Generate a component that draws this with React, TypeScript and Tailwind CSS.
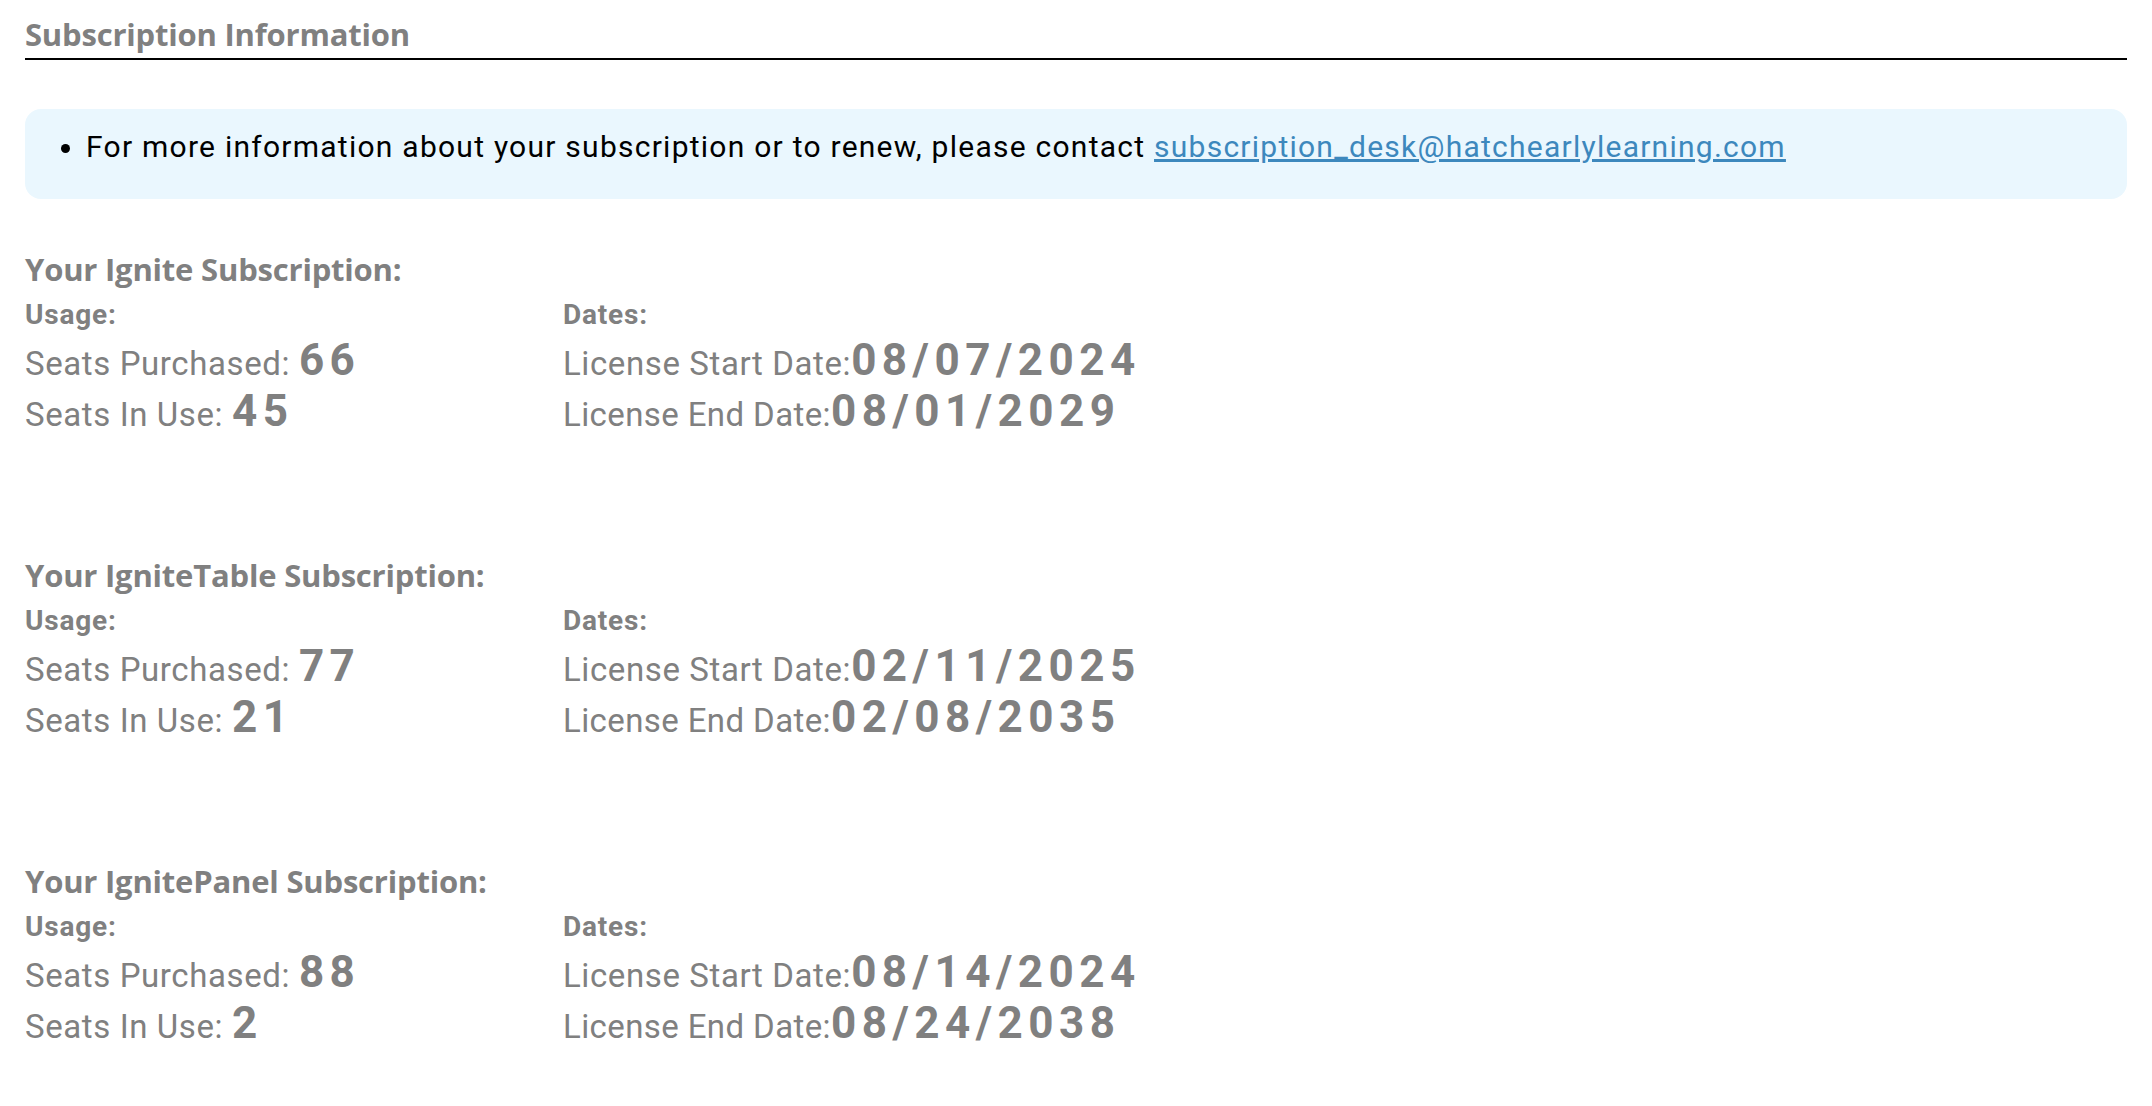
import React from "react"

type Sub = {
    name: string
    purchased: number
    inUse: number
    start: string
    end: string
}

const subs: Sub[] = [
    { name: "Ignite", purchased: 66, inUse: 45, start: "08/07/2024", end: "08/01/2029" },
    { name: "IgniteTable", purchased: 77, inUse: 21, start: "02/11/2025", end: "02/08/2035" },
    { name: "IgnitePanel", purchased: 88, inUse: 2, start: "08/14/2024", end: "08/24/2038" },
]

const heading = "font-['Open_Sans','Lato',sans-serif] font-bold text-[#808080] tracking-[-0.2px]"
const body = "font-['Roboto','Liberation_Sans',sans-serif]"

const Value = ({ children }: { children: React.ReactNode }) => (
    <span className="text-[44px] leading-none font-bold tracking-[5.5px]">{children}</span>
)

const SubscriptionBlock = ({ sub }: { sub: Sub }) => (
    <section className="mb-[113px]">
        <h3 className={`${heading} text-[31px] leading-[45px]`}>
            Your {sub.name} Subscription:
        </h3>
        <div className={`${body} grid grid-cols-[538px_1fr] text-[#808080]`}>
            {/* usage */}
            <div>
                <div className="text-[28px] leading-[46px] font-bold tracking-[0.8px]">Usage:</div>
                <div className="text-[33px] leading-[51px] tracking-[0.6px]">
                    Seats Purchased: <Value>{sub.purchased}</Value>
                </div>
                <div className="text-[33px] leading-[51px] tracking-[0.6px]">
                    Seats In Use: <Value>{sub.inUse}</Value>
                </div>
            </div>
            {/* dates */}
            <div>
                <div className="text-[28px] leading-[46px] font-bold tracking-[0.8px]">Dates:</div>
                <div className="text-[33px] leading-[51px] tracking-[0.6px]">
                    License Start Date:<Value>{sub.start}</Value>
                </div>
                <div className="text-[33px] leading-[51px] tracking-[0.4px]">
                    License End Date:<Value>{sub.end}</Value>
                </div>
            </div>
        </div>
    </section>
)

export default function App() {
    return (
        <main className="min-h-screen bg-white px-[25px]">
            {/* Title */}
            <h2
                className={`${heading} text-[31px] leading-[36px] pt-[16px] pb-[6px] border-b-2 border-black`}
            >
                Subscription Information
            </h2>

            {/* Info box */}
            <div className={`${body} mt-[49px] rounded-[16px] bg-[#eaf7fe] pl-[39px] pt-[20px] pb-[34px]`}>
                <ul className="list-disc pl-[22px] text-[30px] leading-[36px] text-black tracking-[1.25px]">
                    <li>
                        For more information about your subscription or to renew, please contact{" "}
                        <a
                            href="mailto:subscription_desk@hatchearlylearning.com"
                            className="text-[#3d88bd] underline"
                        >
                            subscription_desk@hatchearlylearning.com
                        </a>
                    </li>
                </ul>
            </div>

            <div className="mt-[48px]">
                {subs.map((s) => (
                    <SubscriptionBlock key={s.name} sub={s} />
                ))}
            </div>
        </main>
    )
}
